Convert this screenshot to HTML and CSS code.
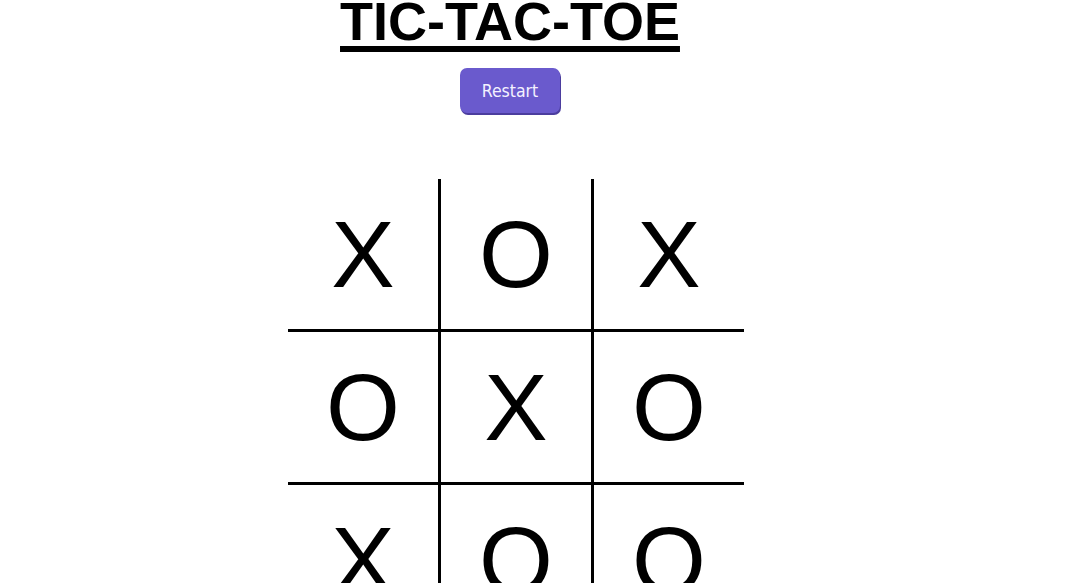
FILE: index.html
```html
<!DOCTYPE html>
<html lang="en">
<head>
<meta charset="utf-8">
<title>Tic-Tac-Toe</title>
<link rel="stylesheet" href="styles.css">
</head>
<body>
<main class="game">
  <h1 class="title">TIC-TAC-TOE</h1>
  <button class="restart" type="button">Restart</button>
  <div class="board-wrap">
    <div class="board">
      <div class="cell r1 c1">X</div>
      <div class="cell r1 c2">O</div>
      <div class="cell r1 c3">X</div>
      <div class="cell r2 c1">O</div>
      <div class="cell r2 c2">X</div>
      <div class="cell r2 c3">O</div>
      <div class="cell r3 c1">X</div>
      <div class="cell r3 c2">O</div>
      <div class="cell r3 c3">O</div>
    </div>
  </div>
</main>
</body>
</html>
```
FILE: styles.css
```css
html, body {
  margin: 0;
  padding: 0;
  background: #ffffff;
}

.game {
  width: 1020px;
  display: flex;
  flex-direction: column;
  align-items: center;
  font-family: "Liberation Sans", Arial, sans-serif;
}

.title {
  margin: 0;
  font-family: "Liberation Sans", Arial, sans-serif;
  font-size: 54px;
  font-weight: bold;
  line-height: 43px;
  color: #000;
  text-decoration: underline;
  text-decoration-thickness: 6px;
  text-underline-offset: 6px;
}

.restart {
  margin-top: 25px;
  width: 100px;
  height: 45px;
  padding: 0;
  border: none;
  border-radius: 7px;
  background: #6a5acd;
  box-shadow: 1px 2px 0 #4b3d9e;
  color: #f4f2ff;
  font-family: "DejaVu Sans Condensed", "DejaVu Sans", Verdana, sans-serif;
  font-stretch: condensed;
  font-size: 17.5px;
}

.board-wrap {
  margin-top: 66px;
  padding-left: 12px;
  display: flex;
  justify-content: center;
}

.board {
  display: grid;
  grid-template-columns: repeat(3, auto);
}

.cell {
  width: 150px;
  height: 150px;
  display: flex;
  align-items: center;
  justify-content: center;
  font-family: "Liberation Sans", Arial, sans-serif;
  font-size: 95px;
  color: #000;
}

.c1, .c2 {
  border-right: 3px solid #000;
}

.r1, .r2 {
  border-bottom: 3px solid #000;
}
```
